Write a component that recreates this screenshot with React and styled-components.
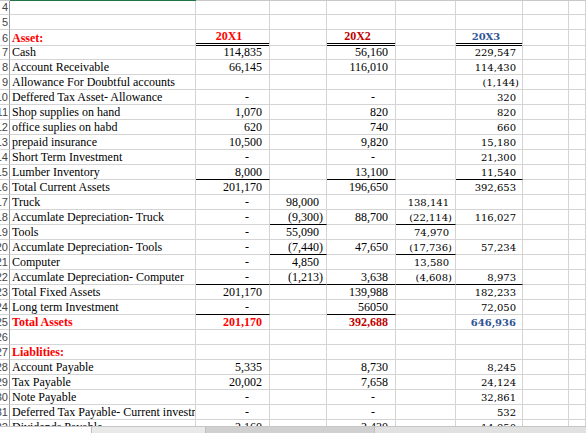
import React from "react";
import styled, { createGlobalStyle } from "styled-components";

const GlobalStyle = createGlobalStyle`
  html, body { margin: 0; padding: 0; background: #fff; }
`;

const COLS = "10px 186px 74px 57px 69px 60px 67px 46px 1fr";
const GRID = "#d4d4d4";

const Sheet = styled.div`
  width: 586px;
  height: 433px;
  overflow: hidden;
  display: flex;
  flex-direction: column;
  font-family: "Liberation Serif", "Times New Roman", serif;
  font-size: 12px;
  color: #000;
`;

const Body = styled.div`
  height: 427px;
  overflow: hidden;
  display: flex;
  flex-direction: column;
`;

const TopStrip = styled.div`
  display: grid;
  grid-template-columns: ${COLS};
  height: 1px;
  flex-shrink: 0;
  & > div { background: #c8c8c8; }
  & > div:nth-child(2) { background: #217346; }
`;

const Row = styled.div`
  display: grid;
  grid-template-columns: ${COLS};
  height: ${(p) => (p.$first ? 14 : 15)}px;
  flex-shrink: 0;
`;

const RowHead = styled.div`
  display: flex;
  justify-content: flex-end;
  align-items: flex-end;
  overflow: hidden;
  box-sizing: border-box;
  border-right: 1px solid #9b9b9b;
  border-bottom: 1px solid ${GRID};
  font-family: "Liberation Sans", Arial, sans-serif;
  font-size: 11px;
  color: #444;
  line-height: 13px;
  white-space: nowrap;
  padding-right: 1px;
`;

const Cell = styled.div`
  box-sizing: border-box;
  border-right: 1px solid ${GRID};
  border-bottom: ${(p) =>
    p.$line === "double"
      ? "3px double #000"
      : p.$line === "single"
      ? "1px solid #000"
      : `1px solid ${GRID}`};
  display: flex;
  align-items: flex-end;
  justify-content: ${(p) =>
    p.$align === "left" ? "flex-start" : p.$align === "center" ? "center" : "flex-end"};
  padding: ${(p) => (p.$align === "left" ? "0 0 0 2px" : `0 ${p.$pr}px 0 0`)};
  white-space: nowrap;
  overflow: ${(p) => (p.$clip ? "hidden" : "visible")};
  line-height: 13px;
  font-family: ${(p) =>
    p.$alt ? '"DejaVu Serif", Cambria, serif' : '"Liberation Serif", "Times New Roman", serif'};
  font-size: ${(p) => (p.$alt ? "10px" : "12px")};
  font-weight: ${(p) => (p.$bold ? 700 : 400)};
  color: ${(p) => p.$color || "#000"};
`;

const BottomBar = styled.div`
  height: 6px;
  background: #e1e1e1;
  border-top: 1px solid #c6c6c6;
  display: flex;
`;

const TabPart = styled.div`
  width: ${(p) => p.$w}px;
  background: ${(p) => p.$bg};
  border-right: 1px solid #bdbdbd;
`;

const RED = "#ff0000";
const DARKRED = "#c00000";
const BLUE = "#2f5597";

// [label, B, C, D, E, F], lines: per column index -> "single"/"double"
const rows = [
  { n: 4 },
  { n: 5 },
  { n: 6, label: "Asset:", labelColor: RED, labelBold: true, head: true,
    cells: ["20X1", "", "20X2", "", "20X3"], lines: { 1: "double", 3: "double", 5: "double" } },
  { n: 7, label: "Cash", cells: ["114,835", "", "56,160", "", "229,547"] },
  { n: 8, label: "Account Receivable", cells: ["66,145", "", "116,010", "", "114,430"] },
  { n: 9, label: "Allowance For Doubtful accounts", cells: ["", "", "", "", "(1,144)"] },
  { n: 10, label: "Deffered Tax Asset- Allowance", cells: ["-", "", "-", "", "320"] },
  { n: 11, label: "Shop supplies on hand", cells: ["1,070", "", "820", "", "820"] },
  { n: 12, label: "office suplies on habd", cells: ["620", "", "740", "", "660"] },
  { n: 13, label: "prepaid insurance", cells: ["10,500", "", "9,820", "", "15,180"] },
  { n: 14, label: "Short Term Investment", cells: ["-", "", "-", "", "21,300"] },
  { n: 15, label: "Lumber Inventory", cells: ["8,000", "", "13,100", "", "11,540"],
    lines: { 1: "single", 3: "single", 5: "single" } },
  { n: 16, label: "Total Current Assets", cells: ["201,170", "", "196,650", "", "392,653"] },
  { n: 17, label: "Truck", cells: ["-", "98,000", "", "138,141", ""] },
  { n: 18, label: "Accumlate Depreciation- Truck", cells: ["-", "(9,300)", "88,700", "(22,114)", "116,027"],
    lines: { 2: "single", 4: "single" } },
  { n: 19, label: "Tools", cells: ["-", "55,090", "", "74,970", ""] },
  { n: 20, label: "Accumlate Depreciation- Tools", cells: ["-", "(7,440)", "47,650", "(17,736)", "57,234"],
    lines: { 2: "single", 4: "single" } },
  { n: 21, label: "Computer", cells: ["-", "4,850", "", "13,580", ""] },
  { n: 22, label: "Accumlate Depreciation- Computer", cells: ["-", "(1,213)", "3,638", "(4,608)", "8,973"],
    lines: { 1: "single", 2: "single", 3: "single", 4: "single", 5: "single" } },
  { n: 23, label: "Total  Fixed Assets", cells: ["201,170", "", "139,988", "", "182,233"] },
  { n: 24, label: "Long term Investment", cells: ["-", "", "56050", "", "72,050"],
    lines: { 1: "single", 3: "single" } },
  { n: 25, label: "Total Assets", labelColor: RED, labelBold: true, total: true,
    cells: ["201,170", "", "392,688", "", "646,936"] },
  { n: 26 },
  { n: 27, label: "Liablities:", labelColor: RED, labelBold: true },
  { n: 28, label: "Account Payable", cells: ["5,335", "", "8,730", "", "8,245"] },
  { n: 29, label: "Tax Payable", cells: ["20,002", "", "7,658", "", "24,124"] },
  { n: 30, label: "Note Payable", cells: ["-", "", "-", "", "32,861"] },
  { n: 31, label: "Deferred Tax Payable- Current investments", cells: ["-", "", "-", "", "532"] },
  { n: 32, label: "Dividends Payable", cells: ["2,160", "", "2,430", "", "14,950"] },
  { n: 33 },
];

const cellProps = (row, col, v) => {
  const alt = col === 4 || col === 5;
  const p = { $alt: alt, $align: "right", $pr: 7 };
  if (v === "-") p.$pr = 20;
  else if (v.startsWith("(")) p.$pr = 3;
  if (alt) p.$pr = v.startsWith("(") ? 3 : 6;
  if (row.head) {
    p.$align = "center";
    p.$bold = true;
    p.$color = col === 1 ? RED : col === 3 ? DARKRED : BLUE;
  }
  if (row.total) {
    p.$bold = true;
    p.$color = col === 1 ? RED : col === 3 ? DARKRED : BLUE;
  }
  return p;
};

export default function App() {
  return (
    <Sheet>
      <GlobalStyle />
      <Body>
        <TopStrip>
          {Array.from({ length: 9 }).map((_, i) => <div key={i} />)}
        </TopStrip>
        {rows.map((row, ri) => {
          const cells = row.cells || ["", "", "", "", ""];
          const lines = row.lines || {};
          return (
            <Row key={row.n} $first={ri === 0}>
              <RowHead>{row.n}</RowHead>
              <Cell $align="left" $clip $color={row.labelColor} $bold={row.labelBold}>
                {row.label || ""}
              </Cell>
              {cells.map((v, ci) => (
                <Cell key={ci} $line={lines[ci + 1]} {...cellProps(row, ci + 1, v)}>
                  {v}
                </Cell>
              ))}
              <Cell />
              <Cell />
            </Row>
          );
        })}
      </Body>
      <BottomBar>
        <TabPart $w={91} $bg="#ffffff" />
        <TabPart $w={113} $bg="#e9e9e9" />
        <TabPart $w={168} $bg="#d0d0d0" />
      </BottomBar>
    </Sheet>
  );
}
